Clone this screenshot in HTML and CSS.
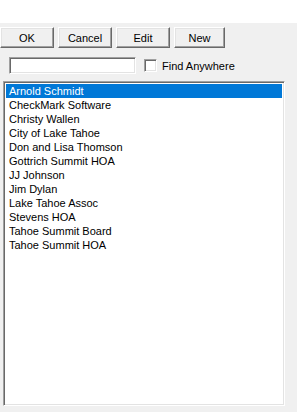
FILE: index.html
```html
<!DOCTYPE html>
<html>
<head>
<meta charset="utf-8">
<link rel="stylesheet" href="styles.css">
</head>
<body>
<div class="top"></div>
<div class="panel">
  <div class="buttons">
    <button class="btn w53">OK</button>
    <button class="btn w53">Cancel</button>
    <button class="btn w53">Edit</button>
    <button class="btn w50">New</button>
  </div>
  <div class="search">
    <div class="input"></div>
    <div class="check"></div>
    <span class="label">Find Anywhere</span>
  </div>
  <div class="list">
    <div class="item sel">Arnold Schmidt</div>
    <div class="item">CheckMark Software</div>
    <div class="item">Christy Wallen</div>
    <div class="item">City of Lake Tahoe</div>
    <div class="item">Don and Lisa Thomson</div>
    <div class="item">Gottrich Summit HOA</div>
    <div class="item">JJ Johnson</div>
    <div class="item">Jim Dylan</div>
    <div class="item">Lake Tahoe Assoc</div>
    <div class="item">Stevens HOA</div>
    <div class="item">Tahoe Summit Board</div>
    <div class="item">Tahoe Summit HOA</div>
  </div>
</div>
</body>
</html>
```
FILE: styles.css
```css
html, body {
  margin: 0;
  padding: 0;
  background: #f0f0f0;
  font-family: "Liberation Sans", Arial, sans-serif;
  font-size: 11px;
  color: #000;
}
.top {
  height: 23px;
  background: #fff;
}
.panel {
  background: #f0f0f0;
  height: 389px;
  padding-top: 4px;
  box-sizing: border-box;
}
.buttons {
  display: flex;
  gap: 4px;
}
.btn {
  height: 21px;
  box-sizing: border-box;
  margin: 0;
  padding: 0;
  background: #f0f0f0;
  border-top: 1px solid #fff;
  border-left: 1px solid #fff;
  border-right: 1px solid #696969;
  border-bottom: 1px solid #696969;
  box-shadow: inset -1px -1px 0 #a0a0a0, inset 1px 1px 0 #e3e3e3;
  font-family: "Liberation Sans", Arial, sans-serif;
  font-size: 11px;
  color: #000;
  line-height: 18px;
}
.w53 { width: 54px; }
.w50 { width: 51px; }
.search {
  display: flex;
  align-items: center;
  margin-top: 9px;
  padding-left: 9px;
  height: 17px;
}
.input {
  width: 127px;
  height: 17px;
  box-sizing: border-box;
  background: #fff;
  border-top: 1px solid #a0a0a0;
  border-left: 1px solid #a0a0a0;
  border-right: 1px solid #fff;
  border-bottom: 1px solid #fff;
  box-shadow: inset 1px 1px 0 #696969, inset -1px -1px 0 #e3e3e3;
}
.check {
  width: 13px;
  height: 13px;
  box-sizing: border-box;
  margin-left: 8px;
  background: #fff;
  border-top: 1px solid #a0a0a0;
  border-left: 1px solid #a0a0a0;
  border-right: 1px solid #fff;
  border-bottom: 1px solid #fff;
  box-shadow: inset 1px 1px 0 #696969, inset -1px -1px 0 #e3e3e3;
}
.label {
  margin-left: 5px;
}
.list {
  margin-top: 7px;
  margin-left: 3px;
  width: 282px;
  height: 325px;
  box-sizing: border-box;
  background: #fff;
  border-top: 1px solid #a0a0a0;
  border-left: 1px solid #a0a0a0;
  border-right: 1px solid #fff;
  border-bottom: 1px solid #fff;
  box-shadow: inset 1px 1px 0 #696969, inset -1px -1px 0 #e3e3e3;
  padding: 2px 2px 2px 2px;
}
.item {
  height: 14px;
  line-height: 14px;
  padding-left: 3px;
  white-space: nowrap;
}
.sel {
  background: #0078d7;
  color: #fff;
}
```
